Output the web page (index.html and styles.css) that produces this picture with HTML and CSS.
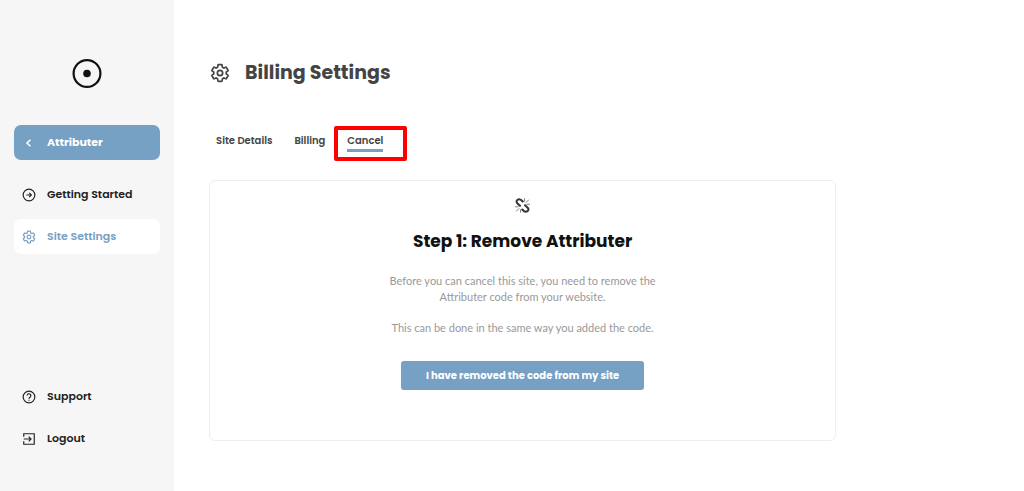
FILE: index.html
```html
<!DOCTYPE html>
<html lang="en">
<head>
    <meta charset="UTF-8">
    <meta name="viewport" content="width=device-width, initial-scale=1.0">
    <title>Billing Settings</title>
    <link rel="stylesheet" href="styles.css">
</head>
<body>
    <svg class="sprite" aria-hidden="true">
        <symbol id="gear" viewBox="0 0 24 24">
            <path d="M19.43 12.98c.04-.32.07-.64.07-.98s-.03-.66-.07-.98l2.11-1.65c.19-.15.24-.42.12-.64l-2-3.46c-.12-.22-.39-.3-.61-.22l-2.49 1c-.52-.4-1.08-.73-1.69-.98l-.38-2.65C14.46 2.18 14.25 2 14 2h-4c-.25 0-.46.18-.49.42l-.38 2.65c-.61.25-1.17.59-1.69.98l-2.49-1c-.23-.09-.49 0-.61.22l-2 3.46c-.13.22-.07.49.12.64l2.11 1.65c-.04.32-.07.65-.07.98s.03.66.07.98l-2.11 1.65c-.19.15-.24.42-.12.64l2 3.46c.12.22.39.3.61.22l2.49-1c.52.4 1.08.73 1.69.98l.38 2.65c.03.24.24.42.49.42h4c.25 0 .46-.18.49-.42l.38-2.65c.61-.25 1.17-.59 1.69-.98l2.49 1c.23.09.49 0 .61-.22l2-3.46c.12-.22.07-.49-.12-.64z"/>
            <circle cx="12" cy="12" r="3.2"/>
        </symbol>
    </svg>

    <div class="layout">
        <aside class="sidebar">
            <a class="logo" href="#" aria-label="Home">
                <svg viewBox="0 0 30 30">
                    <circle cx="15" cy="15.5" r="13.4" fill="none" stroke="#111" stroke-width="2.2"/>
                    <circle cx="15" cy="15.5" r="3.8" fill="#111"/>
                </svg>
            </a>

            <nav class="menu">
                <a class="menu-item site-name" href="#">
                    <svg class="icon" viewBox="0 0 24 24"><path d="M14.5 6.500L8.500 12l6 5.500" stroke-width="2.6"/></svg>
                    Attributer
                </a>
                <a class="menu-item" href="#">
                    <svg class="icon" viewBox="0 0 24 24"><circle cx="12" cy="12" r="10"/><path d="M7.5 12h8M12.5 8.5L16 12l-3.5 3.5"/></svg>
                    Getting Started
                </a>
                <a class="menu-item active" href="#">
                    <svg class="icon"><use href="#gear"/></svg>
                    Site Settings
                </a>
            </nav>

            <nav class="menu menu-bottom">
                <a class="menu-item" href="#">
                    <svg class="icon" viewBox="0 0 24 24"><circle cx="12" cy="12" r="10"/><path d="M8.8 9.6a3.2 3.2 0 1 1 5.2 2.5c-1.2.9-2 1.5-2 2.9M12 16.5v2"/></svg>
                    Support
                </a>
                <a class="menu-item" href="#">
                    <svg class="icon" viewBox="0 0 24 24"><path d="M3 8V3h18v18H3v-5M3 12h12M11.5 8l4 4-4 4"/></svg>
                    Logout
                </a>
            </nav>
        </aside>

        <main class="content">
            <header class="page-header">
                <svg class="icon"><use href="#gear"/></svg>
                <h1>Billing Settings</h1>
            </header>

            <nav class="tabs">
                <a class="tab" href="#">Site Details</a>
                <a class="tab" href="#">Billing</a>
                <a class="tab current" href="#">Cancel</a>
            </nav>

            <section class="card">
                <svg class="unlink" viewBox="0 0 30 30">
                    <path class="link" d="M10 15.500L5 11C1 7 4 2.500 8.500 2.500c3 0 4.500 1.500 7 4.500M20 14.500l5 4.500c4 4 1 8.500-3.500 8.500-3 0-4.500-1.500-7-4.500"/>
                    <path class="ray" d="M19 6.500V1.500M22 9l5-5M23.500 12.500H29M11 23.500v5M8 21l-5 5M6.500 17.500H1"/>
                </svg>
                <h2>Step 1: Remove Attributer</h2>
                <p>Before you can cancel this site, you need to remove the Attributer code from your website.</p>
                <p>This can be done in the same way you added the code.</p>
                <button type="button">I have removed the code from my site</button>
            </section>
        </main>
    </div>
</body>
</html>
```
FILE: styles.css
```css
/* General Styles */
* {
    box-sizing: border-box;
}

body {
    margin: 0;
    font-family: Poppins, Inter, sans-serif;
    background-color: #fff;
    color: #222;
}

a {
    color: inherit;
    text-decoration: none;
}

.sprite {
    display: none;
}

.icon {
    width: 14px;
    height: 14px;
    flex-shrink: 0;
    fill: none;
    stroke: currentColor;
    stroke-width: 2;
    overflow: visible;
}

.layout {
    display: flex;
    min-height: 100vh;
}

/* Sidebar */
.sidebar {
    display: flex;
    flex-direction: column;
    width: 17%;
    padding: 58px 14px 35px;
    background-color: #f6f6f6;
}

.logo {
    align-self: center;
    width: 30px;
    height: 30px;
    margin-bottom: 37px;
}

.logo svg {
    display: block;
}

.menu {
    display: flex;
    flex-direction: column;
    gap: 7px;
}

.menu-bottom {
    margin-top: auto;
}

.menu-item {
    display: flex;
    align-items: center;
    gap: 11px;
    height: 35px;
    padding: 0 8px;
    border-radius: 7px;
    font-size: 11px;
    line-height: 17px;
    font-weight: 600;
    white-space: nowrap;
}

.site-name {
    margin-bottom: 10px;
    background-color: #76a0c4;
    color: #fff;
    font-weight: 700;
}

.active {
    background-color: #fff;
    color: #76a0c4;
}

/* Content */
.content {
    flex: 1;
    padding: 58px 35px 50px;
}

.page-header {
    display: flex;
    align-items: center;
    gap: 15px;
    padding-left: 1px;
    color: #444;
}

.page-header .icon {
    width: 20px;
    height: 20px;
}

h1 {
    margin: 0;
    font-size: 19px;
    line-height: 30px;
    font-weight: 700;
}

.tabs {
    display: flex;
    gap: 22px;
    margin: 44px 0 28px;
    padding-left: 7px;
    color: #444;
    font-size: 10px;
    line-height: 17px;
    font-weight: 600;
}

.tab {
    border-bottom: 3px solid transparent;
}

.current {
    position: relative;
    border-color: #76a0c4;
}

.current::after {
    content: "";
    position: absolute;
    top: -6px;
    left: -13px;
    right: -24px;
    bottom: -12px;
    border: 4px solid #f00;
    border-radius: 2px;
}

.card {
    display: flex;
    flex-direction: column;
    align-items: center;
    max-width: 627px;
    padding: 17px 20px 50px;
    border: 1px solid #eee;
    border-radius: 6px;
    text-align: center;
}

.unlink {
    width: 15px;
    height: 15px;
    fill: none;
    stroke: #333;
    stroke-linecap: round;
}

.link {
    stroke-width: 4;
}

.ray {
    stroke: #555;
    stroke-width: 1.5;
}

h2 {
    margin: 16px 0 20px;
    color: #111;
    font-size: 17px;
    line-height: 24px;
    font-weight: 700;
}

p {
    max-width: 280px;
    margin: 0 0 15px;
    color: #999;
    font-family: Lato, sans-serif;
    font-size: 11px;
    line-height: 16px;
}

button {
    width: 243px;
    height: 29px;
    margin-top: 10px;
    border: none;
    border-radius: 3px;
    background-color: #76a0c4;
    color: #fff;
    font-family: inherit;
    font-size: 10px;
    font-weight: 700;
    cursor: pointer;
}

button:hover {
    background-color: #648fb4;
}
```
